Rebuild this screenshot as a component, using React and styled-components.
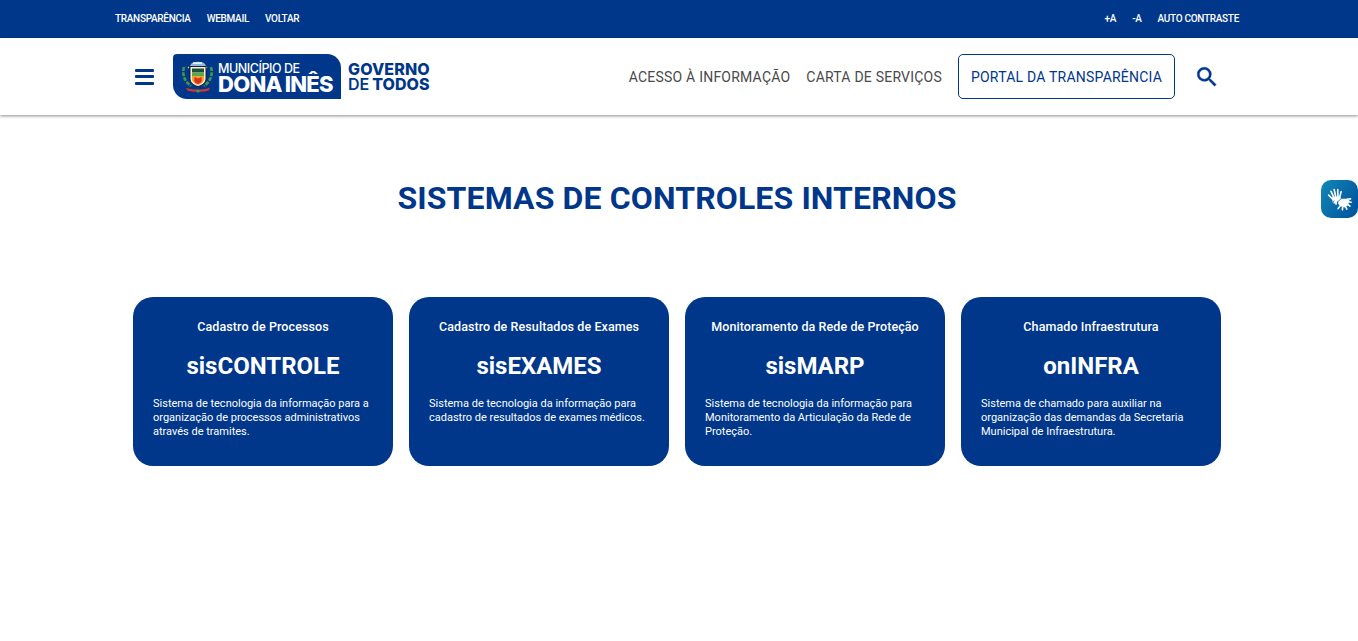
import React from "react";
import styled, { createGlobalStyle } from "styled-components";

const Global = createGlobalStyle`
  html, body { margin: 0; padding: 0; background: #fff; }
  body { font-family: Roboto, "Liberation Sans", sans-serif; height: 641px; overflow: hidden; }
  * { box-sizing: border-box; }
`;
const Page = styled.div`position: relative; width: 1358px; height: 641px; overflow: hidden;`;
const TopBar = styled.div`height: 38px; background: #00378a; padding-right: 4px;`;
const TopInner = styled.div`width: 1124px; height: 100%; margin: 0 auto; display: flex; align-items: center; justify-content: space-between; padding-bottom: 1px;`;
const TopGroup = styled.div`display: flex; gap: ${p => p.$gap}px;`;
const TopLink = styled.a`font-size: 10px; font-weight: 500; color: #fff; text-transform: uppercase; line-height: 12px; letter-spacing: -0.3px;`;
const Header = styled.header`height: 77px; background: #fff; box-shadow: 0 1px 3px rgba(0,0,0,.45); padding-right: 4px; position: relative;`;
const HeaderInner = styled.div`width: 1088px; height: 100%; margin: 0 auto; display: flex; align-items: center;`;
const Burger = styled.button`width: 19px; height: 16px; margin: 0 19px 0 2px; padding: 0; border: 0; background: none; display: flex; flex-direction: column; justify-content: space-between;`;
const BurgerLine = styled.span`display: block; height: 3px; background: #00378a; border-radius: 1px;`;
const Brand = styled.div`display: flex; align-items: center;`;
const Badge = styled.div`width: 168px; height: 45px; background: #00378a; border-radius: 4px 14px 0 14px; display: flex; align-items: center; padding-left: 7px;`;
const BadgeText = styled.div`margin-left: 2px; color: #fff; font-family: Inter, Roboto, sans-serif; display: flex; flex-direction: column; padding-top: 1px;`;
const BadgeTop = styled.span`font-size: 12.5px; font-weight: 500; line-height: 13px; letter-spacing: -0.45px; white-space: nowrap;`;
const BadgeBig = styled.span`font-size: 22px; font-weight: 800; line-height: 18px; letter-spacing: -0.75px; word-spacing: -1px; white-space: nowrap;`;
const Slogan = styled.div`margin-left: 7px; color: #00378a; font-family: Inter, Roboto, sans-serif; font-size: 16px; display: flex; flex-direction: column;`;
const SloganLine = styled.span`line-height: 14.5px; white-space: nowrap; word-spacing: -1.2px; letter-spacing: ${p => p.$spacing}px;`;
const SloganBold = styled.span`font-weight: 800;`;
const SloganLight = styled.span`font-weight: 600;`;
const Nav = styled.nav`margin-left: auto; display: flex; align-items: center;`;
const NavLink = styled.a`font-size: 14px; color: #4a4a4a; letter-spacing: .22px; margin-right: 16px; white-space: nowrap;`;
const PortalLink = styled.a`height: 45px; width: 217px; border: 1px solid #00378a; border-radius: 5px; color: #00378a; font-size: 14px; letter-spacing: .22px; display: flex; align-items: center; justify-content: center;`;
const SearchBtn = styled.span`display: flex; margin-left: 19px; margin-right: 1px; color: #00378a;`;
const Main = styled.main`padding-right: 4px;`;
const Title = styled.h1`margin: 0; padding-top: 65px; height: 182px; text-align: center; font-size: 32px; line-height: 37px; font-weight: 700; letter-spacing: .12px; color: #00378a;`;
const Cards = styled.div`width: 1088px; margin: 0 auto; display: grid; grid-template-columns: repeat(4, 260px); gap: 16px;`;
const Card = styled.a`height: 169px; background: #00378a; border-radius: 20px; color: #fff; padding: 22px 20px 0; display: block;`;
const CardKicker = styled.div`font-size: 12.5px; line-height: 15px; font-weight: 500; letter-spacing: .09px; text-align: center;`;
const CardName = styled.div`margin-top: 18px; font-size: 24px; line-height: 28px; font-weight: 700; text-align: center;`;
const CardText = styled.p`margin: 17px 0 0; font-size: 11px; line-height: 14px;`;
const Libras = styled.div`position: absolute; left: 1321px; top: 180px; width: 37px; height: 38px; border-radius: 10px; background: linear-gradient(120deg, #1189b8 0%, #0a6eaa 45%, #00509c 100%);`;

const Hands = () => (
  <svg width="37" height="38" viewBox="0 0 37 38" fill="none" stroke="#fff" strokeLinecap="round">
    <g transform="translate(0,4) scale(.9,.85)">
      <g strokeWidth="1.8">
        <path d="M11 8.500l3.200 7" />
        <path d="M14.600 6.500l1.800 8.500" />
        <path d="M18.600 6.500l.2 8.500" />
        <path d="M22.400 9l-1.800 7" />
        <path d="M8.500 13l4.500 5" />
      </g>
      <path d="M13 15.500l8-.5.5 3-4 2.500-.5 3.500-3-1.500z" fill="#fff" stroke="#fff" strokeWidth="1" />
      <path d="M14.500 20c-2 1-1.500 3.500 1 3.500" stroke="#0a6eaa" strokeWidth="1" />
      <path d="M19 20.500l4-3.500h6l3 2-1.500 6-4 3-5-1.500-2.500-3z" fill="#fff" stroke="#0f78ae" strokeWidth=".7" />
      <g strokeWidth="1.800">
        <path d="M29 18l3.800-.5" />
        <path d="M30 21l3.500.5" />
        <path d="M29.500 24l2.700 2" />
        <path d="M27.500 27l1.200 2.600" />
        <path d="M24 27.500l-.2 3" />
        <path d="M21 26l-2 3" />
      </g>
    </g>
  </svg>
);
const Emblem = () => (
  <svg width="36" height="36" viewBox="0 0 36 36">
    <g fill="none" stroke="#3c9a46" strokeWidth="2.600" strokeDasharray="4 1.200">
      <path d="M4 8c-2 7 0 14 7 19" />
      <path d="M31 8c2 7 0 14-7 19" />
    </g>
    <path d="M8 9l1-1M27 9l-1-1" stroke="#e8d23a" strokeWidth="1.500" />
    <path d="M11 5c2-3 12-3 14 0l1 2H10z" fill="#8fb9de" />
    <path d="M13 3.400h9v1.400h-9z" fill="#fff" />
    <path d="M10 7.500h16v12c0 4.500-4 7-8 8-4-1-8-3.500-8-8z" fill="#f5f1d8" stroke="#10131f" strokeWidth=".9" />
    <path d="M12 9.500h12v4H12z" fill="#1d4f3a" />
    <path d="M12 13.500h12V17H12z" fill="#5ca64d" />
    <path d="M12 17h12v3c0 3-3 5.200-6 5.800-3-.6-6-2.800-6-5.800z" fill="#f0a52a" />
    <path d="M14.500 18l3.500 1.500 3.500-1.500.2 3.500c0 1.800-2 3-3.700 3.400-1.700-.4-3.700-1.600-3.700-3.400z" fill="#dd2f25" />
    <path d="M6 28.500c4 2.800 20 2.800 24 0l-1 2.800c-5 2-17 2-22 0z" fill="#d8352e" />
    <path d="M15.500 32l2.500-1.500 2.500 1.500-2.500 2z" fill="#3c9a46" />
  </svg>
);
const cards = [
  ["Cadastro de Processos", "sisCONTROLE", "Sistema de tecnologia da informação para a organização de processos administrativos através de tramites."],
  ["Cadastro de Resultados de Exames", "sisEXAMES", "Sistema de tecnologia da informação para cadastro de resultados de exames médicos."],
  ["Monitoramento da Rede de Proteção", "sisMARP", "Sistema de tecnologia da informação para Monitoramento da Articulação da Rede de Proteção."],
  ["Chamado Infraestrutura", "onINFRA", "Sistema de chamado para auxiliar na organização das demandas da Secretaria Municipal de Infraestrutura."],
];
export default function App() {
  return (
    <Page>
      <Global />
      <TopBar>
        <TopInner>
          <TopGroup $gap={16}>
            <TopLink>Transparência</TopLink><TopLink>Webmail</TopLink><TopLink>Voltar</TopLink>
          </TopGroup>
          <TopGroup $gap={16}>
            <TopLink>+A</TopLink><TopLink>-A</TopLink><TopLink>Auto Contraste</TopLink>
          </TopGroup>
        </TopInner>
      </TopBar>
      <Header>
        <HeaderInner>
          <Burger aria-label="menu"><BurgerLine /><BurgerLine /><BurgerLine /></Burger>
          <Brand>
            <Badge>
              <Emblem />
              <BadgeText>
                <BadgeTop>MUNICÍPIO DE</BadgeTop>
                <BadgeBig>DONA INÊS</BadgeBig>
              </BadgeText>
            </Badge>
            <Slogan>
              <SloganLine $spacing={0.1}><SloganBold>GOVERNO</SloganBold></SloganLine>
              <SloganLine $spacing={0.05}><SloganLight>DE </SloganLight><SloganBold>TODOS</SloganBold></SloganLine>
            </Slogan>
          </Brand>
          <Nav>
            <NavLink>ACESSO À INFORMAÇÃO</NavLink>
            <NavLink>CARTA DE SERVIÇOS</NavLink>
            <PortalLink>PORTAL DA TRANSPARÊNCIA</PortalLink>
            <SearchBtn>
              <svg width="26" height="26" viewBox="0 0 24 24" fill="currentColor" stroke="currentColor" strokeWidth=".4"><path d="M15.500 14h-.79l-.28-.27A6.470 6.470 0 0 0 16 9.500 6.500 6.500 0 1 0 9.500 16c1.610 0 3.090-.59 4.230-1.570l.27.28v.79l5 4.990L20.490 19l-4.990-5zm-6 0C7.010 14 5 11.990 5 9.500S7.010 5 9.500 5 14 7.010 14 9.500 11.990 14 9.500 14z" /></svg>
            </SearchBtn>
          </Nav>
        </HeaderInner>
      </Header>
      <Main>
        <Title>SISTEMAS DE CONTROLES INTERNOS</Title>
        <Cards>
          {cards.map(([k, n, t]) => (
            <Card key={n}>
              <CardKicker>{k}</CardKicker>
              <CardName>{n}</CardName>
              <CardText>{t}</CardText>
            </Card>
          ))}
        </Cards>
      </Main>
      <Libras><Hands /></Libras>
    </Page>
  );
}
